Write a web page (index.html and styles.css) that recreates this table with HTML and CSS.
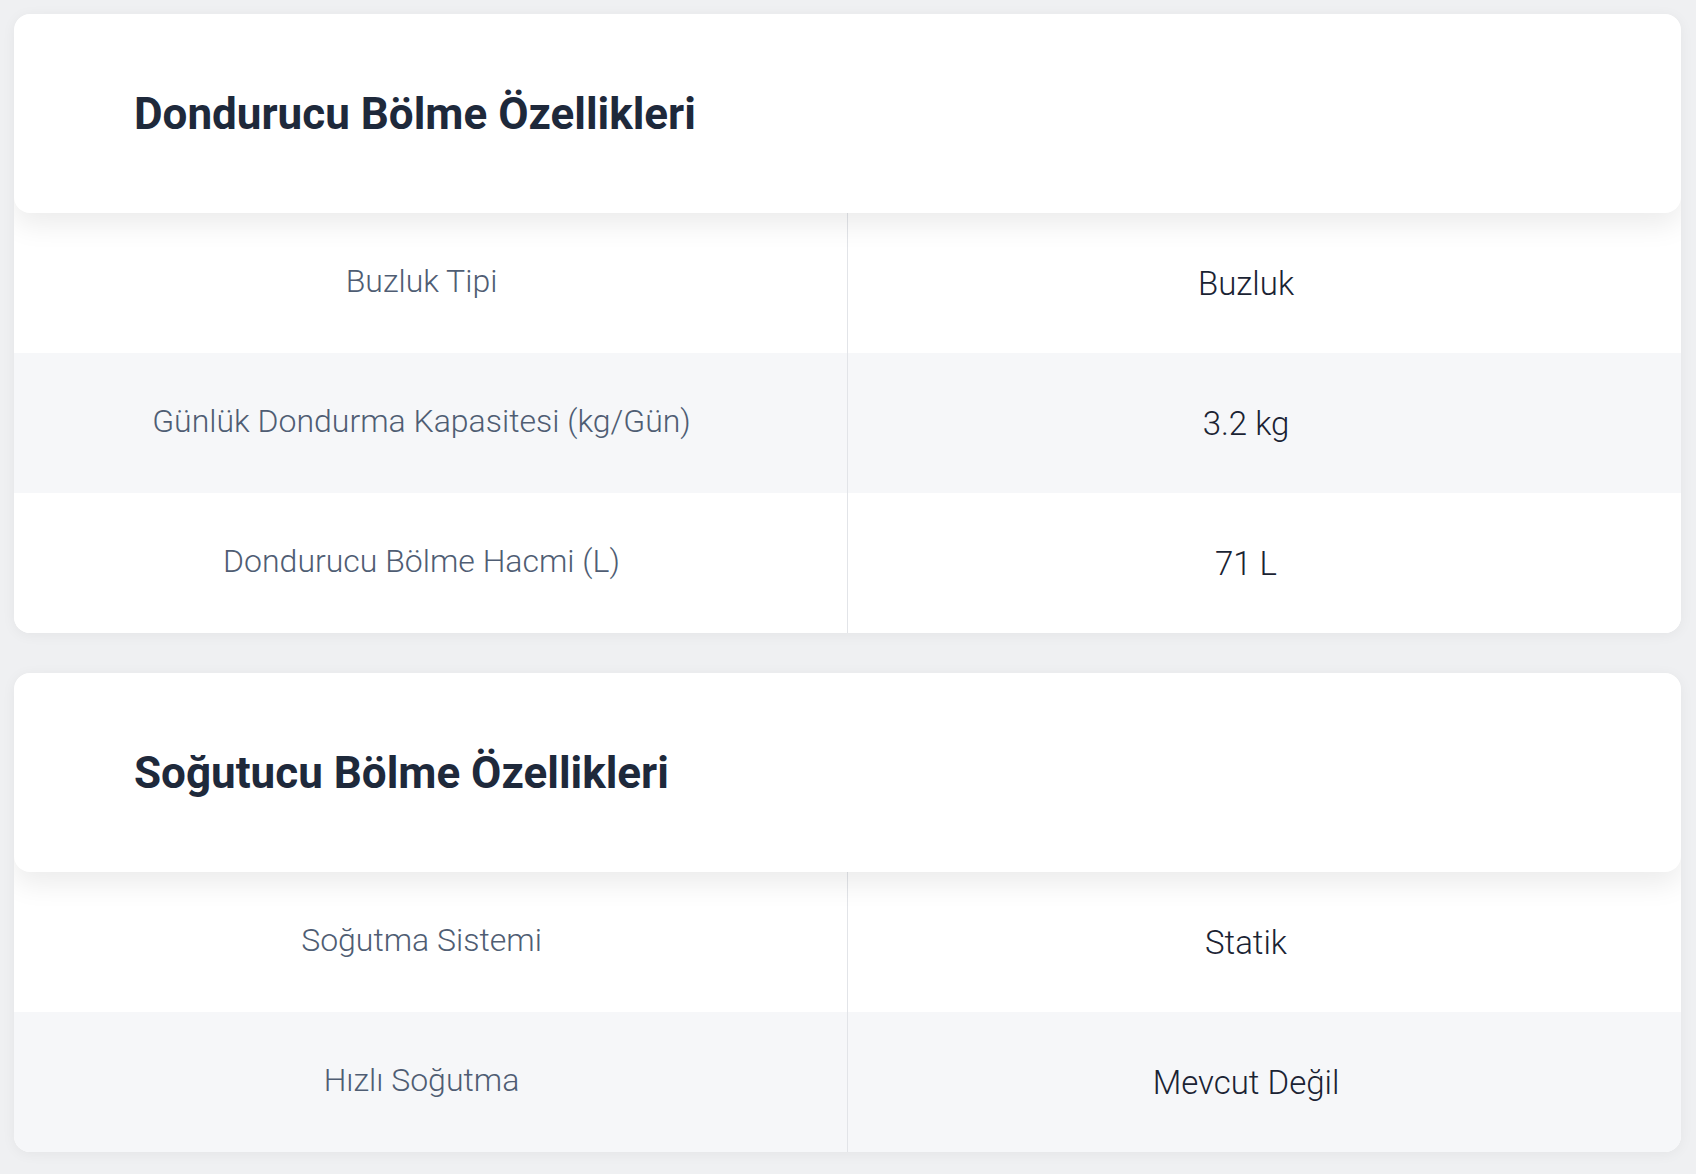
FILE: index.html
```html
<!DOCTYPE html>
<html lang="tr">
<head>
<meta charset="utf-8">
<title>Özellikler</title>
<link rel="stylesheet" href="styles.css">
</head>
<body>
<main class="page">
  <section class="spec-card">
    <header class="spec-head"><h2 class="spec-title">Dondurucu Bölme Özellikleri</h2></header>
    <div class="spec-rows">
      <div class="spec-row">
        <div class="spec-label">Buzluk Tipi</div>
        <div class="spec-value">Buzluk</div>
      </div>
      <div class="spec-row alt">
        <div class="spec-label">Günlük Dondurma Kapasitesi (kg/Gün)</div>
        <div class="spec-value">3.2 kg</div>
      </div>
      <div class="spec-row">
        <div class="spec-label">Dondurucu Bölme Hacmi (L)</div>
        <div class="spec-value">71 L</div>
      </div>
    </div>
  </section>
  <section class="spec-card">
    <header class="spec-head"><h2 class="spec-title">Soğutucu Bölme Özellikleri</h2></header>
    <div class="spec-rows">
      <div class="spec-row">
        <div class="spec-label">Soğutma Sistemi</div>
        <div class="spec-value">Statik</div>
      </div>
      <div class="spec-row alt">
        <div class="spec-label">Hızlı Soğutma</div>
        <div class="spec-value">Mevcut Değil</div>
      </div>
    </div>
  </section>
</main>
</body>
</html>
```
FILE: styles.css
```css
html, body {
  margin: 0;
  padding: 0;
  background: #eff0f2;
}
body {
  font-family: Roboto, "Noto Sans", "Liberation Sans", sans-serif;
}
.page {
  display: flex;
  flex-direction: column;
  gap: 40px;
  padding: 14px 15px 20px 14px;
}
.spec-card {
  background: #ffffff;
  border-radius: 16px;
  overflow: hidden;
  box-shadow: 0 2px 14px rgba(0, 0, 0, 0.05);
}
.spec-head {
  position: relative;
  z-index: 1;
  height: 199px;
  display: flex;
  align-items: center;
  padding-left: 120px;
  background: #ffffff;
  border-radius: 16px;
  box-shadow: 0 12px 28px rgba(0, 0, 0, 0.08);
}
.spec-title {
  margin: 0;
  font-size: 44px;
  font-weight: 700;
  color: #1e293b;
  letter-spacing: 0;
}
.spec-row {
  display: grid;
  grid-template-columns: 834px 1fr;
  height: 140px;
  background: #ffffff;
}
.spec-row.alt {
  background: #f6f7f9;
}
.spec-label,
.spec-value {
  display: flex;
  align-items: center;
  justify-content: center;
  font-size: 32px;
}
.spec-label {
  color: #4f5d73;
  font-weight: 300;
  border-right: 1px solid #e2e4e8;
  padding-right: 18px;
  padding-bottom: 4px;
}
.spec-value {
  color: #1a2333;
  font-weight: 300;
  font-size: 33px;
  padding-right: 37px;
}
```
